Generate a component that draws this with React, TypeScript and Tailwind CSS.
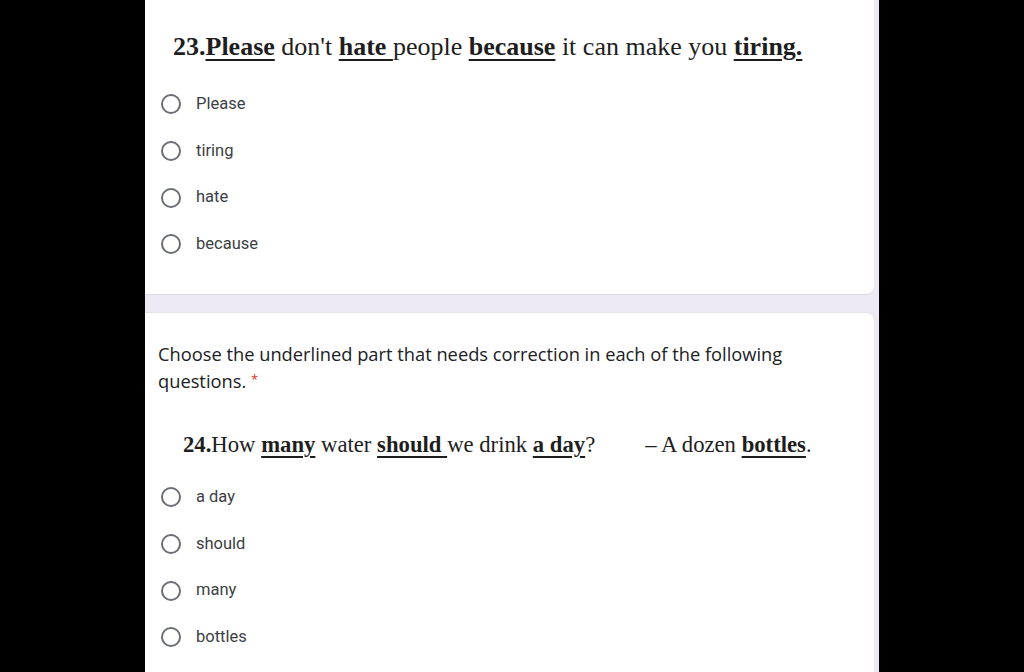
const serif = { fontFamily: '"Liberation Serif", "Times New Roman", serif' };

function Radio({ label }: { label: string }) {
  return (
    <div className="flex h-[46.7px] items-center">
      <span className="ml-[16px] box-border h-[20px] w-[20px] rounded-full border-2 border-[#6b6e72]" />
      <span className="ml-[15px] font-['Roboto',sans-serif] text-[16.5px] text-[#3c4043]">{label}</span>
    </div>
  );
}

function U({ children }: { children: React.ReactNode }) {
  return <span className="font-bold underline decoration-2 underline-offset-[4px]">{children}</span>;
}

export default function App() {
  return (
    <div className="flex h-[672px] w-[1024px] overflow-hidden bg-black">
      <div className="w-[145px] shrink-0 bg-black" />
      <div className="flex w-[734px] shrink-0 flex-col bg-[#ece9f4]">
        <section className="mr-[5px] h-[295px] shrink-0 rounded-br-lg border-b border-[#dcdae2] bg-white">
          <p className="ml-[28px] pt-[31px] text-[26px] leading-[32px] text-[#1e1e1e]" style={serif}>
            <span className="font-bold">23.</span>
            <U>Please</U> don&apos;t <U>hate </U>people <U>because</U> it can make you <U>tiring.</U>
          </p>
          <div className="mt-[18px]">
            <Radio label="Please" />
            <Radio label="tiring" />
            <Radio label="hate" />
            <Radio label="because" />
          </div>
        </section>
        <section className="mr-[5px] mt-[17px] flex-1 rounded-tr-lg border-t border-[#e4e2ea] bg-white">
          <p className="ml-[13px] pt-[27px] font-['Open_Sans',sans-serif] text-[18.3px] leading-[27px] text-[#202124]">
            Choose the underlined part that needs correction in each of the following
            <br />
            questions. <span className="relative top-[-4px] text-[13px] leading-none text-[#d93025]">*</span>
          </p>
          <p className="ml-[38px] mt-[36px] text-[22.7px] leading-[30px] text-[#1e1e1e]" style={serif}>
            <span className="font-bold">24.</span>How <U>many</U> water <U>should </U>we drink <U>a day</U>?
            <span className="ml-[50px]">– A dozen </span>
            <U>bottles</U>.
          </p>
          <div className="mt-[14px]">
            <Radio label="a day" />
            <Radio label="should" />
            <Radio label="many" />
            <Radio label="bottles" />
          </div>
        </section>
      </div>
      <div className="flex-1 bg-black" />
    </div>
  );
}
